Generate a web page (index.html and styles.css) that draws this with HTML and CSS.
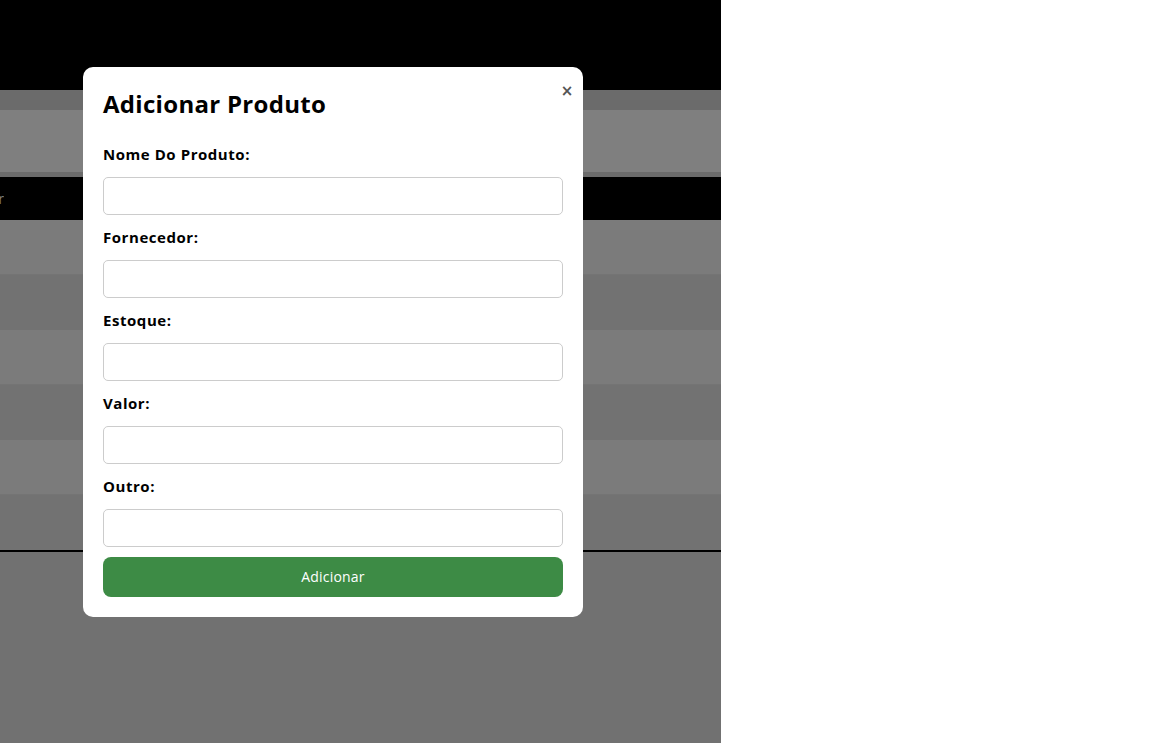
FILE: index.html
```html
<!DOCTYPE html>
<html lang="pt">
<head>
<meta charset="utf-8">
<title>Adicionar Produto</title>
<link rel="stylesheet" href="styles.css">
</head>
<body>
<div class="page">
  <header class="top"></header>
  <div class="subnav"></div>
  <div class="band"></div>
  <div class="subnav thin"></div>
  <div class="thead"><div class="th-cut"><span>Fornecedor</span></div></div>
  <div class="row odd"></div>
  <div class="row even"></div>
  <div class="row odd"></div>
  <div class="row even"></div>
  <div class="row odd"></div>
  <div class="row even"></div>
  <div class="tfoot"></div>

  <div class="overlay">
    <div class="modal">
      <button class="close" type="button">&times;</button>
      <h2 class="title">Adicionar Produto</h2>
      <form class="form">
        <label class="label">Nome Do Produto:</label>
        <input class="input" type="text">
        <label class="label">Fornecedor:</label>
        <input class="input" type="text">
        <label class="label">Estoque:</label>
        <input class="input" type="text">
        <label class="label">Valor:</label>
        <input class="input" type="text">
        <label class="label">Outro:</label>
        <input class="input" type="text">
        <button class="submit" type="button">Adicionar</button>
      </form>
    </div>
  </div>
</div>
</body>
</html>
```
FILE: styles.css
```css
* { box-sizing: border-box; }
html, body { margin: 0; padding: 0; background: #fff; }
body { font-family: "Open Sans", "DejaVu Sans", sans-serif; }

.page {
  position: relative;
  width: 721px;
  height: 743px;
  background: #e2e2e2;
  overflow: hidden;
  display: flex;
  flex-direction: column;
}
.top { height: 90px; background: #000; }
.subnav { height: 20px; background: #d6d6d6; }
.subnav.thin { height: 5px; }
.band { height: 62px; background: #fefefe; }
.thead { height: 43px; background: #000; display: flex; align-items: center; }
.th-cut { width: 4px; overflow: hidden; display: flex; justify-content: flex-end; }
.th-cut span { color: #fff; font-size: 14px; white-space: nowrap; }
.row { height: 55px; }
.row.odd { background: #f6f6f6; border-bottom: 1px solid #e8e8e8; }
.row.even { background: #e4e4e4; }
.tfoot { height: 2px; background: #000; }

.overlay {
  position: absolute;
  inset: 0;
  background: rgba(0, 0, 0, 0.5);
}

.modal {
  position: absolute;
  left: 83px;
  top: 67px;
  width: 500px;
  height: 550px;
  background: #fff;
  border-radius: 10px;
  padding: 20px;
  font-family: "Open Sans", "DejaVu Sans", sans-serif;
}

.close {
  position: absolute;
  top: 14px;
  right: 6px;
  border: 0;
  background: none;
  padding: 0;
  width: 20px;
  height: 20px;
  font-size: 15px;
  font-weight: 700;
  line-height: 20px;
  text-align: center;
  color: #555;
  font-family: "DejaVu Sans", sans-serif;
}

.title {
  margin: 0 0 22px;
  font-size: 24px;
  line-height: 34px;
  font-weight: 700;
  letter-spacing: 0.3px;
  color: #000;
}

.form { display: flex; flex-direction: column; }
.label {
  display: block;
  font-size: 15px;
  line-height: 22px;
  font-weight: 700;
  letter-spacing: 0.55px;
  color: #000;
  margin-bottom: 12px;
}
.input {
  width: 460px;
  height: 38px;
  border: 1px solid #ccc;
  border-radius: 5px;
  margin: 0 0 11px;
  padding: 0 10px;
  font-size: 14px;
}
.input:last-of-type { margin-bottom: 10px; }
.submit {
  height: 40px;
  width: 460px;
  border: 0;
  border-radius: 8px;
  background: #3d8b45;
  color: #fff;
  font-size: 14px;
  line-height: 38px;
  padding: 0;
  letter-spacing: 0.2px;
  font-family: "Open Sans", "DejaVu Sans", sans-serif;
}
```
